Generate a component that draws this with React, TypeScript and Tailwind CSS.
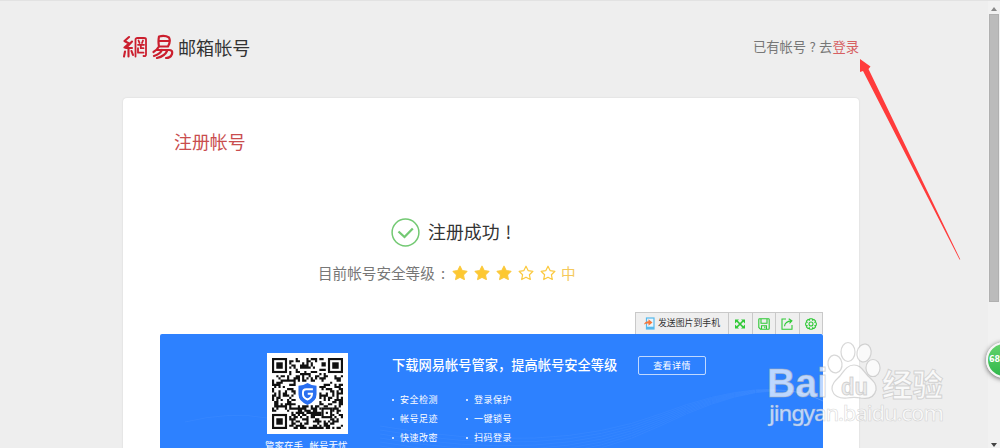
import React from 'react';

const menuIcons = ['expand', 'save', 'share', 'gear'];

const features = ['安全检测', '登录保护', '帐号足迹', '一键锁号', '快速改密', '扫码登录'];

const STAR = 'M8 1.200l2.100 4.400 4.800.7-3.500 3.400.9 4.800L8 12.200l-4.300 2.300.9-4.800L1.100 6.300l4.800-.7z';

const QR_SIZE = 33;

// Finder squares live in three corners, the shield covers the middle
function buildQr() {
  const cells: string[] = [];
  let seed = 91;
  for (let y = 0; y < QR_SIZE; y++) {
    for (let x = 0; x < QR_SIZE; x++) {
      seed = (seed * 1103515245 + 12345) % 2147483648;
      const finder = (x < 8 && y < 8) || (x > 24 && y < 8) || (x < 8 && y > 24);
      const logo = x > 10 && x < 22 && y > 10 && y < 22;
      const align = x > 22 && x < 28 && y > 22 && y < 28;
      if (!finder && !logo && !align && (seed >> 16) % 100 < 50) {
        cells.push(`M${x} ${y}h1v1h-1z`);
      }
    }
  }
  return cells.join('');
}

const qrPath = buildQr();

function QrCode() {
  return (
    <div className="w-[81px] h-[81px] bg-white p-[5px]">
      <svg className="w-[71px] h-[71px]" viewBox="0 0 33 33">
        <path d={qrPath} fill="#111" />
        {[[0, 0], [26, 0], [0, 26]].map(([x, y]) => (
          <g key={`${x}-${y}`}>
            <rect x={x + 0.5} y={y + 0.5} width="6" height="6" fill="#fff" stroke="#111" />
            <rect x={x + 2} y={y + 2} width="3" height="3" fill="#111" />
          </g>
        ))}
        <rect x="23.5" y="23.5" width="4" height="4" fill="#fff" stroke="#111" />
        <rect x="25" y="25" width="1" height="1" fill="#111" />
        <path d="M16.500 11.600q2 1.300 4.200 1.300v4q0 3.300-4.200 4.900q-4.200-1.600-4.200-4.900v-4q2.200 0 4.200-1.300z" fill="#2a6ff0" />
        <path d="M19 14.500h-3.100q-1.500 0-1.500 1.400v1q0 1.600 2.100 2.400q2.100-.8 2.100-2.700h-2" fill="none" stroke="#fff" strokeWidth=".9" />
      </svg>
    </div>
  );
}

function Star({ filled }: { filled: boolean }) {
  return (
    <svg className="w-4 h-4" viewBox="0 0 16 16">
      <path d={STAR} fill={filled ? '#fdc830' : 'none'} stroke="#fbc93e" strokeWidth="1.2" strokeLinejoin="round" />
    </svg>
  );
}

function MenuIcon({ name }: { name: string }) {
  return (
    <svg className="w-3 h-3" viewBox="0 0 12 12" fill="none" stroke="#2fc936" strokeWidth="1.1">
      {name === 'expand' && (
        <>
          <path d="M3 3l6 6M9 3L3 9" strokeWidth="1.7" />
          <path d="M1 1.500h4L1 5.500zM11 1.500v4L7 1.500zM1 10.500v-4l4 4zM11 10.500H7l4-4z" fill="#2fc936" stroke="none" />
        </>
      )}
      {name === 'save' && (
        <>
          <path d="M.8 1.500q0-.7.700-.7h9q.7 0 .7.700v9q0 .7-.7.700H2.500L.8 9.500z" />
          <path d="M3 1v4.200h6V1M3.500 11V7.800h5V11M6.800 8.500v1.800" />
        </>
      )}
      {name === 'share' && (
        <>
          <path d="M5 1H1v10.200h10V7" />
          <path d="M3.500 8.200Q4 3.300 10.500 2.900M7.700.7l3.200 2.200-2.400 2.500" />
        </>
      )}
      {name === 'gear' && (
        <>
          <path d="M4.800.7h2.400l.4 1.400 1.300-.7 1.700 1.700-.7 1.300 1.400.4v2.400l-1.400.4.700 1.300-1.700 1.700-1.300-.7-.4 1.400H4.800l-.4-1.400-1.300.7-1.700-1.700.7-1.300-1.400-.4V4.800l1.400-.4-.7-1.300 1.700-1.700 1.300.7z" />
          <circle cx="6" cy="6" r="2" />
        </>
      )}
    </svg>
  );
}

function ImageToolbar() {
  return (
    <div className="absolute right-0 -top-[22px] h-[22px] w-[188px] flex bg-[#efefef] border border-b-0 border-[#c9c9c9]">
      <div className="w-[92px] flex items-center pl-[8px]">
        <svg className="w-[11px] h-[13px] shrink-0" viewBox="0 0 11 13">
          <rect x="2.500" y="1" width="7.500" height="11" fill="#e9f6fd" stroke="#55b8ec" strokeWidth="1.200" />
          <path d="M2.500 9.700H10V12H2.500z" fill="#55b8ec" />
          <path d="M0 7.500Q.5 4.500 4.500 4.300V2.200l4 3.300-4 3.200V6.600Q2 6.300 0 7.500z" fill="#f4783c" />
        </svg>
        <span className="ml-[3px] text-[8.900px] leading-none text-[#333] whitespace-nowrap">发送图片到手机</span>
      </div>
      {menuIcons.map((name) => (
        <div key={name} className="flex-1 border-l border-[#c9c9c9] flex items-center justify-center">
          <MenuIcon name={name} />
        </div>
      ))}
    </div>
  );
}

function Banner() {
  return (
    <div className="relative mt-[51px] ml-[37px] w-[663px] h-[180px]">
      <ImageToolbar />
      <div className="relative h-full rounded-[2px] bg-[#2d81ff] overflow-hidden flex text-white">
        <svg className="absolute inset-0 w-full h-full" viewBox="0 0 663 180" fill="none" stroke="#6aa9ff" strokeOpacity=".13">
          <path d="M25 88Q70 77 107 84" />
          {[0, 4, 8, 12, 16, 20, 24].map((n) => (
            <path key={n} d={`M220 ${92 + n}Q390 ${122 + n} 500 ${80 + n / 2}T663 67`} />
          ))}
        </svg>
        <div className="relative pt-[19px] ml-[107px] w-[81px]">
          <QrCode />
          <p className="mt-[4px] -ml-[2px] text-[9.500px] leading-[14px] whitespace-nowrap">管家在手&nbsp;&nbsp; 帐号无忧</p>
        </div>
        <div className="relative ml-[44px] pt-[21px]">
          <div className="flex items-center h-[20px]">
            <h2 className="w-[246px] text-[13.250px] font-medium leading-5 whitespace-nowrap">下载网易帐号管家，提高帐号安全等级</h2>
            <button className="w-[68px] h-[19px] border border-white/70 rounded-[2px] text-[9px] tracking-[.4px] leading-none">查看详情</button>
          </div>
          <ul className="mt-[15px] w-[148px] grid grid-cols-2 text-[9px] leading-[19px] tracking-[.500px]">
            {features.map((item) => (
              <li key={item} className="flex items-center whitespace-nowrap">
                <span className="w-[2px] h-[2px] rounded-full bg-white mr-[6px]" />
                {item}
              </li>
            ))}
          </ul>
        </div>
      </div>
    </div>
  );
}

function Watermark() {
  return (
    <div className="absolute left-[766px] top-[338px] w-[182px] h-[92px]">
      <svg className="w-full h-full" viewBox="0 0 182 92" fill="#fff" fillOpacity=".7" stroke="#b0b0b0" strokeOpacity=".5" strokeWidth="1.200">
        <ellipse cx="69" cy="25" rx="7" ry="9" transform="rotate(-8 69 25)" />
        <ellipse cx="82" cy="13" rx="7" ry="9.500" />
        <ellipse cx="98" cy="14" rx="7" ry="9" transform="rotate(12 98 14)" />
        <ellipse cx="107" cy="29" rx="7" ry="8.500" />
        <path d="M88 26c7 0 9 6 14 11 4 4 9 7 8 14-2 8-9 9-15 8-5-1-9-1-14 0-7 1-14-2-15-9 0-6 4-9 8-13 4-5 7-11 14-11z" />
        <text x="1" y="58" fontSize="40" textLength="61" lengthAdjust="spacingAndGlyphs" strokeWidth="1" className="font-['Liberation_Sans'] font-bold">Bai</text>
        <text x="75" y="56" fontSize="24" textLength="27" lengthAdjust="spacingAndGlyphs" strokeWidth="1" fill="#e6e6e6" className="font-['Liberation_Sans'] font-bold">du</text>
        <text x="116" y="57" fontSize="31" textLength="61" lengthAdjust="spacingAndGlyphs" strokeWidth="1" className="font-['Noto_Sans_CJK_SC'] font-bold">经验</text>
        <text x="3" y="82" fontSize="22" textLength="175" lengthAdjust="spacing" strokeWidth=".6" className="font-['Noto_Sans'] font-medium">jingyan.baidu.com</text>
      </svg>
    </div>
  );
}

function Scrollbar() {
  return (
    <div className="w-[12px] h-full flex flex-col items-center bg-[#f1f1f1]">
      <svg className="w-[6px] h-[4px] mt-[6px] mb-[3px]" viewBox="0 0 6 4">
        <path d="M0 4l3-4 3 4z" fill="#888" />
      </svg>
      <div className="w-[10px] h-[288px] bg-[#bbb] border border-[#b0b0b0]" />
      <svg className="w-[6px] h-[4px] mt-auto mb-[1px]" viewBox="0 0 6 4">
        <path d="M0 0h6L3 4z" fill="#444" />
      </svg>
    </div>
  );
}

export default function App() {
  return (
    <div className="relative w-[1000px] h-[448px] overflow-hidden bg-[#eee] border-t border-[#e2e2e2] flex font-['Noto_Sans_CJK_SC',sans-serif]">
      <div className="flex-1 pl-[123px]">
        <header className="w-[736px] h-[97px] pb-[6px] flex items-center justify-between">
          <div className="flex items-center">
            <svg className="w-[51px] h-[26px]" viewBox="0 0 51 26" fill="none" stroke="#cb1f2e" strokeWidth="2.400" strokeLinecap="round" strokeLinejoin="round">
              <path d="M6 3L1.500 7 6 9.500 1.500 13.500M9 7.500L3 14h6M5.500 14v8.500M2 17.500l-1 5M8.500 17l1.500 4" strokeWidth="2.100" />
              <path d="M12.500 22.500V5.500q0-1.500 2-1.500h6.500q2 0 2 1.500V20.500q0 2-2.500 1.500M15.500 6.500l1 2.500M20 6.500l-1 2.500M15 10.800h6M15 14.200v4.500h5.500M17.800 10.800v3.400h2.700" strokeWidth="1.800" />
              <path d="M36 2.500q-1 5 0 10h9q3-5 1-9-4-2.500-10-1zM36 7h10M36 12.500Q34 16 30.500 18M34 16h12q4 0 3 4-1.500 4-6 4M39 16q-2 4-8 6M44 17q-2 5-10 7" strokeWidth="2.200" />
            </svg>
            <span className="ml-[4px] text-[18.100px] leading-6 text-[#333]">邮箱帐号</span>
          </div>
          <p className="text-[13.300px] text-[#777] flex">
            已有帐号<span className="w-[13px] text-center">?</span>去<a href="#" className="text-[#d66062]">登录</a>
          </p>
        </header>

        <main className="w-[736px] h-[400px] bg-white rounded-[4px] shadow-[0_0_2px_rgba(0,0,0,0.12)]">
          <h1 className="pt-[30px] pl-[51px] text-[17.900px] leading-[26px] text-[#c94d4e]">注册帐号</h1>
          <div className="mt-[63px] ml-[268px] flex items-center h-[30px]">
            <svg className="w-[29px] h-[29px]" viewBox="0 0 29 29" fill="none" stroke="#73c973">
              <circle cx="14.500" cy="14.500" r="13.400" strokeWidth="1.500" />
              <path d="M7.500 13.500l6 5.500L21.800 10.500" strokeWidth="2.300" />
            </svg>
            <span className="ml-[8px] text-[17.900px] leading-none text-[#333]">注册成功</span>
            <span className="ml-[6px] text-[17.700px] leading-none text-[#333]">!</span>
          </div>
          <div className="mt-[16px] ml-[195px] h-[20px] flex items-center text-[14.600px] text-[#777]">
            <span className="w-[117px] whitespace-nowrap">目前帐号安全等级</span>
            <span className="w-[16px] text-center">:</span>
            <div className="flex gap-[6px] ml-[1px]">
              {[1, 2, 3, 4, 5].map((n) => (
                <Star key={n} filled={n <= 3} />
              ))}
            </div>
            <span className="ml-[5px] text-[#f5c95a]">中</span>
          </div>
          <Banner />
        </main>
      </div>
      <Scrollbar />

      {/* Pointer to the login link */}
      <svg className="absolute left-[855px] top-[54px] w-[110px] h-[210px]" viewBox="855 55 110 210">
        <path d="M860 59l10.500 7.500-2 2.500L960.300 259.500h-.8L863 71l-3 1z" fill="#ff3b3b" />
      </svg>
      <Watermark />
      <div className="absolute left-[986px] top-[341px] w-[36px] h-[36px] rounded-full border-2 border-[#f6f6f6] bg-linear-to-b from-[#62d36b] to-[#2fb84c] shadow-[0_1px_5px_rgba(0,0,0,0.6)] flex items-center pl-px text-[8px] font-bold text-white font-['DejaVu_Sans']">
        68
      </div>
    </div>
  );
}
